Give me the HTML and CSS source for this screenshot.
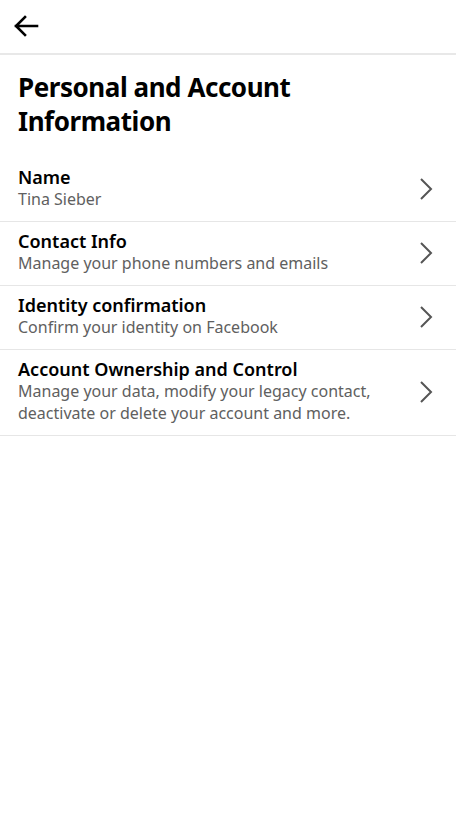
FILE: index.html
```html
<!DOCTYPE html>
<html>
<head>
<meta charset="utf-8">
<link rel="stylesheet" href="styles.css">
</head>
<body>
<div class="screen">
  <header class="topbar">
    <svg class="back" width="26" height="22" viewBox="0 0 26 22">
      <path d="M24 11H3M12 2L3 11l9 9" fill="none" stroke="#000" stroke-width="2.6" stroke-linecap="square"/>
    </svg>
  </header>
  <h1 class="title">Personal and Account Information</h1>
  <ul class="list">
    <li class="row">
      <div class="text"><div class="label">Name</div><div class="sub">Tina Sieber</div></div>
      <svg class="chev" width="16" height="24" viewBox="0 0 16 24"><path d="M3 2l10 10-10 10" fill="none" stroke="#555" stroke-width="2"/></svg>
    </li>
    <li class="row">
      <div class="text"><div class="label">Contact Info</div><div class="sub">Manage your phone numbers and emails</div></div>
      <svg class="chev" width="16" height="24" viewBox="0 0 16 24"><path d="M3 2l10 10-10 10" fill="none" stroke="#555" stroke-width="2"/></svg>
    </li>
    <li class="row">
      <div class="text"><div class="label">Identity confirmation</div><div class="sub">Confirm your identity on Facebook</div></div>
      <svg class="chev" width="16" height="24" viewBox="0 0 16 24"><path d="M3 2l10 10-10 10" fill="none" stroke="#555" stroke-width="2"/></svg>
    </li>
    <li class="row">
      <div class="text"><div class="label">Account Ownership and Control</div><div class="sub">Manage your data, modify your legacy contact, deactivate or delete your account and more.</div></div>
      <svg class="chev" width="16" height="24" viewBox="0 0 16 24"><path d="M3 2l10 10-10 10" fill="none" stroke="#555" stroke-width="2"/></svg>
    </li>
  </ul>
</div>
</body>
</html>
```
FILE: styles.css
```css
* { box-sizing: border-box; }
html, body { margin: 0; padding: 0; background: #fff; }
body { font-family: "Noto Sans", "Open Sans", sans-serif; color: #000; }
.screen { width: 456px; min-height: 830px; background: #fff; }
.topbar {
  height: 55px;
  border-bottom: 2px solid #e8e8e8;
  display: flex;
  align-items: center;
  padding-left: 13px;
  padding-bottom: 2px;
}
.back { display: block; }
.title {
  margin: 0;
  padding: 15px 90px 20px 18px;
  font-size: 26px;
  line-height: 34px;
  font-weight: 700;
  letter-spacing: -0.45px;
}
.list { list-style: none; margin: 0; padding: 0; }
.row {
  display: flex;
  align-items: center;
  padding: 9px 22px 11px 18px;
  border-bottom: 1px solid #e6e6e6;
}
.text { flex: 1; min-width: 0; }
.label { font-size: 18px; line-height: 21px; font-weight: 600; color: #000; }
.sub { font-size: 16px; line-height: 22px; color: #606060; padding-right: 30px; }
.chev { flex: none; display: block; }
```
